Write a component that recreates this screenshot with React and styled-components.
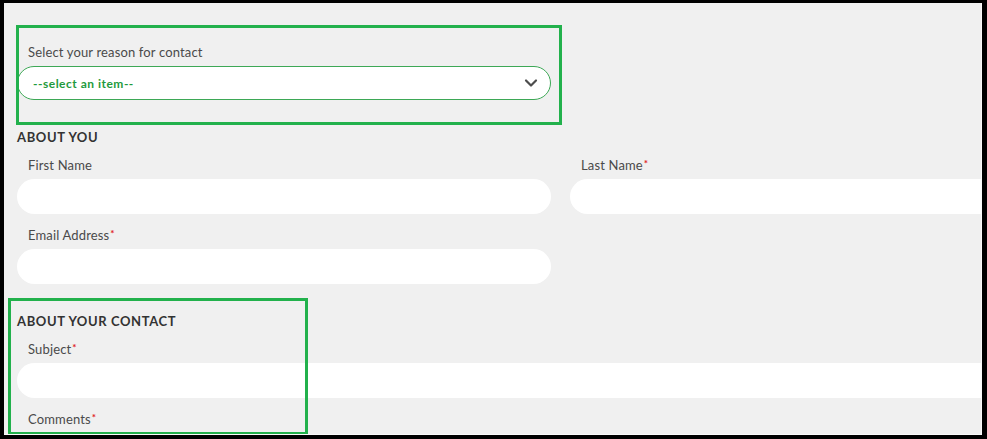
import React from 'react';
import styled, { createGlobalStyle } from 'styled-components';

const GlobalStyle = createGlobalStyle`
    html, body {
        margin: 0;
        padding: 0;
        background: #000;
    }
    * {
        box-sizing: border-box;
    }
`;

const green = '#22b14c';
const grey = '#f0f0f0';

const Frame = styled.div`
    width: 987px;
    height: 439px;
    padding: 3px 5px 4px 4px;
    background: #000;
`;

const Page = styled.div`
    position: relative;
    width: 100%;
    height: 100%;
    overflow: hidden;
    background: ${grey};
    border-right: 1px solid #fafafa;
    border-bottom: 1px solid #fafafa;
    font-family: Lato, "Liberation Sans", sans-serif;
`;

const Form = styled.form`
    width: 1110px;
    padding: 41px 0 0 13px;
    display: flex;
    flex-direction: column;
`;

const Field = styled.div`
    display: flex;
    flex-direction: column;
    margin-bottom: ${p => p.$last ? '0' : '13px'};
`;

const Label = styled.label`
    display: block;
    height: 16px;
    padding-left: 11px;
    margin-bottom: 6px;
    font-size: 13px;
    line-height: 16px;
    color: #4a4a4a;
    letter-spacing: 0.15px;
`;

const Required = styled.span`
    position: relative;
    top: -3px;
    line-height: 0;
    color: #e0201e;
    font-size: 10px;
    font-weight: 700;
    margin-left: 1px;
`;

const SectionTitle = styled.h3`
    margin: ${p => p.$top}px 0 12px;
    font-size: 13px;
    line-height: 16px;
    font-weight: 700;
    color: #333;
    letter-spacing: 0.6px;
`;

const Row = styled.div`
    display: grid;
    grid-template-columns: 534px 534px;
    column-gap: 19px;
`;

const Input = styled.input`
    width: ${p => p.$wide ? '100%' : '534px'};
    height: 35px;
    border: none;
    border-radius: 18px;
    background: #fff;
    outline: none;
`;

const SelectBox = styled.div`
    position: relative;
    width: 534px;
    height: 34px;
    border: 1px solid #3da856;
    border-radius: 17px;
    background: #fff;
    display: flex;
    align-items: center;
    justify-content: space-between;
    padding: 0 12px 0 15px;
`;

const SelectText = styled.span`
    font-size: 12px;
    font-weight: 700;
    color: #1f9a3d;
    letter-spacing: 0.5px;
`;

const Highlight = styled.div`
    position: absolute;
    left: ${p => p.$x}px;
    top: ${p => p.$y}px;
    width: ${p => p.$w}px;
    height: ${p => p.$h}px;
    border: 3px solid ${green};
    pointer-events: none;
`;

const Chevron = () => (
    <svg width="14" height="10" viewBox="0 0 14 10">
        <path d="M2 2.5 L7 7.5 L12 2.5" fill="none" stroke="#4d4d4d" strokeWidth="2.2" strokeLinecap="round" strokeLinejoin="round" />
    </svg>
);

const App = () => {
    return (
        <>
            <GlobalStyle />
            <Frame>
                <Page>
                    <Form onSubmit={e => e.preventDefault()}>
                        <Field>
                            <Label>Select your reason for contact</Label>
                            <SelectBox>
                                <SelectText>--select an item--</SelectText>
                                <Chevron />
                            </SelectBox>
                        </Field>

                        <SectionTitle $top={16}>ABOUT YOU</SectionTitle>
                        <Row>
                            <Field>
                                <Label>First Name</Label>
                                <Input />
                            </Field>
                            <Field>
                                <Label>Last Name<Required>*</Required></Label>
                                <Input />
                            </Field>
                        </Row>
                        <Field $last>
                            <Label>Email Address<Required>*</Required></Label>
                            <Input />
                        </Field>

                        <SectionTitle $top={29}>ABOUT YOUR CONTACT</SectionTitle>
                        <Field>
                            <Label>Subject<Required>*</Required></Label>
                            <Input $wide />
                        </Field>
                        <Field>
                            <Label>Comments<Required>*</Required></Label>
                        </Field>
                    </Form>

                    <Highlight $x={12} $y={22} $w={546} $h={100} />
                    <Highlight $x={4} $y={295} $w={300} $h={137} />
                </Page>
            </Frame>
        </>
    );
};

export default App;
